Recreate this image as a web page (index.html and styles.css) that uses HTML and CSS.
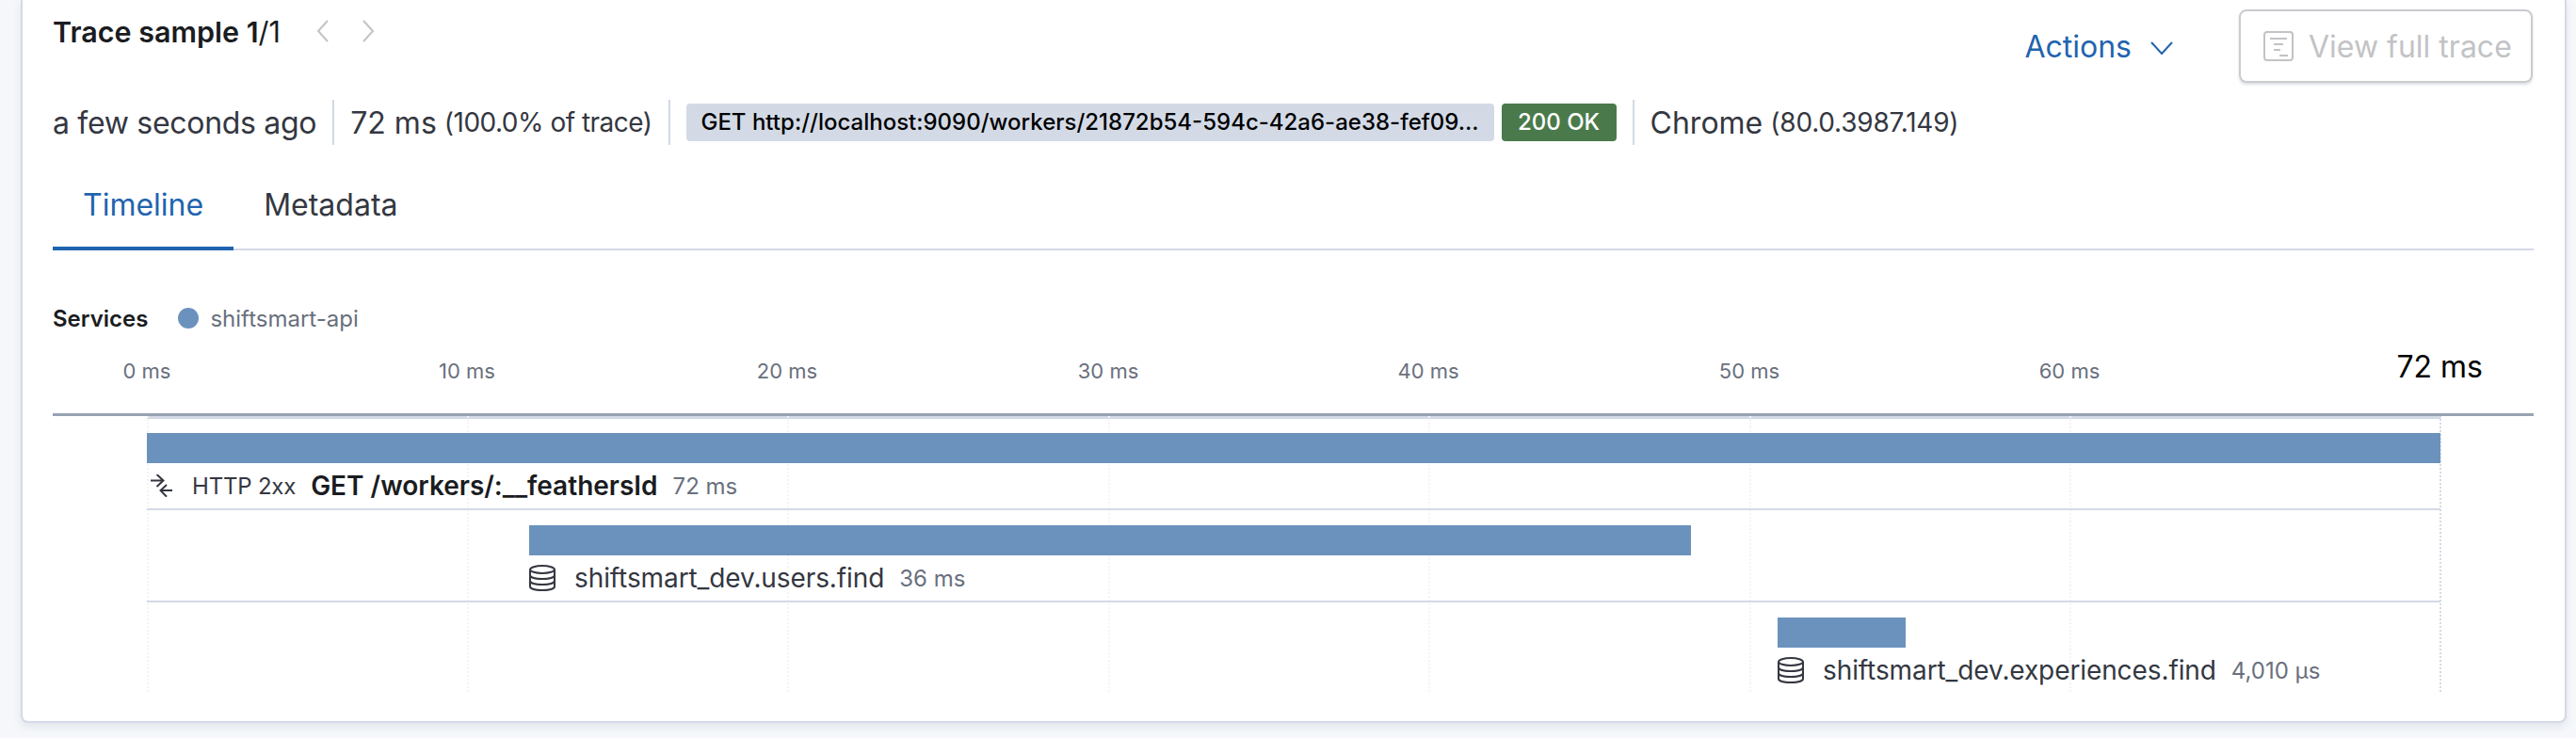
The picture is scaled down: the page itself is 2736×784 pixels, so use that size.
FILE: index.html
```html
<!DOCTYPE html>
<html lang="en">
<head>
    <meta charset="UTF-8">
    <title>Trace sample</title>
    <link rel="stylesheet" href="styles.css">
</head>
<body>
    <div class="panel">
        <div class="head">
            <div class="title-wrap">
                <h3 class="title">Trace sample 1<span class="title-count">/1</span></h3>
                <svg class="pager" viewBox="0 0 14 24"><path d="M12 1 L2 12 L12 23"/></svg>
                <svg class="pager pager-next" viewBox="0 0 14 24"><path d="M2 1 L12 12 L2 23"/></svg>
            </div>
            <div class="head-actions">
                <div class="actions">Actions
                    <svg class="actions-arrow" viewBox="0 0 24 14"><path d="M1 1 L12 13 L23 1"/></svg>
                </div>
                <div class="btn-disabled">
                    <svg class="btn-icon" viewBox="0 0 32 32">
                        <rect x="1" y="1" width="30" height="30" rx="3"/>
                        <path d="M7 8 H25 M11 14 H21 M11 20 H18 M17 26 H26"/>
                    </svg>
                    View full trace
                </div>
            </div>
        </div>

        <div class="meta">
            <div class="meta-item time">a few seconds ago</div>
            <div class="meta-item">72 ms <small>(100.0% of trace)</small></div>
            <div class="meta-item badges">
                <span class="badge badge-url">GET http://localhost:9090/workers/21872b54-594c-42a6-ae38-fef09...</span>
                <span class="badge badge-ok">200 OK</span>
            </div>
            <div class="meta-item">Chrome <small class="version">(80.0.3987.149)</small></div>
        </div>

        <div class="tabs">
            <div class="tab active">Timeline</div>
            <div class="tab">Metadata</div>
        </div>

        <div class="legend">
            <span class="legend-title">Services</span>
            <span class="legend-dot"></span>
            <span class="legend-name">shiftsmart-api</span>
        </div>

        <div class="axis">
            <span class="tick" style="left: 156px">0 ms</span>
            <span class="tick" style="left: 496px">10 ms</span>
            <span class="tick" style="left: 836px">20 ms</span>
            <span class="tick" style="left: 1177px">30 ms</span>
            <span class="tick" style="left: 1517px">40 ms</span>
            <span class="tick" style="left: 1858px">50 ms</span>
            <span class="tick" style="left: 2198px">60 ms</span>
            <span class="tick tick-end">72 ms</span>
        </div>

        <div class="waterfall">
            <div class="gridline" style="left: 0px"></div>
            <div class="gridline" style="left: 340px"></div>
            <div class="gridline" style="left: 680px"></div>
            <div class="gridline" style="left: 1021px"></div>
            <div class="gridline" style="left: 1361px"></div>
            <div class="gridline" style="left: 1702px"></div>
            <div class="gridline" style="left: 2042px"></div>
            <div class="gridline gridline-end" style="left: 2435px"></div>

            <div class="span-row">
                <div class="bar" style="margin-left: 0px; width: 2436px"></div>
                <div class="span-label" style="margin-left: 0px">
                    <svg class="icon-http" viewBox="0 0 24 24">
                        <path d="M0 6.5 H13.5 M6.5 0 L13.5 6.5 L6.5 13 M23 17 H10.5 M17 11 L10.5 17 L17 23.7"/>
                    </svg>
                    <span class="status">HTTP 2xx</span>
                    <b class="span-name">GET /workers/:__feathersId</b>
                    <span class="duration">72 ms</span>
                </div>
            </div>
            <div class="span-row">
                <div class="bar" style="margin-left: 406px; width: 1234px"></div>
                <div class="span-label" style="margin-left: 406px">
                    <svg class="icon-db" viewBox="0 0 28 28">
                        <ellipse cx="14" cy="5" rx="13" ry="4"/>
                        <path d="M1 5 V23 C1 25.5 7 27 14 27 C21 27 27 25.5 27 23 V5 M1 11 C1 13.5 7 15 14 15 C21 15 27 13.5 27 11 M1 17 C1 19.5 7 21 14 21 C21 21 27 19.5 27 17"/>
                    </svg>
                    <span class="db-name">shiftsmart_dev.users.find</span>
                    <span class="duration">36 ms</span>
                </div>
            </div>
            <div class="span-row">
                <div class="bar" style="margin-left: 1732px; width: 136px"></div>
                <div class="span-label" style="margin-left: 1732px">
                    <svg class="icon-db" viewBox="0 0 28 28">
                        <ellipse cx="14" cy="5" rx="13" ry="4"/>
                        <path d="M1 5 V23 C1 25.5 7 27 14 27 C21 27 27 25.5 27 23 V5 M1 11 C1 13.5 7 15 14 15 C21 15 27 13.5 27 11 M1 17 C1 19.5 7 21 14 21 C21 21 27 19.5 27 17"/>
                    </svg>
                    <span class="db-name">shiftsmart_dev.experiences.find</span>
                    <span class="duration">4,010 μs</span>
                </div>
            </div>
        </div>
    </div>
</body>
</html>
```

FILE: styles.css
```css
html, body {
    margin: 0;
    padding: 0;
}
body {
    font-family: Inter, "Liberation Sans", sans-serif;
    background-color: #f5f7fa;
    color: #343741;
    height: 784px;
    overflow: hidden;
}
.panel {
    box-sizing: border-box;
    width: 2704px;
    height: 768px;
    margin-left: 22px;
    padding: 10px 34px 0 32px;
    background: white;
    border: 2px solid #d3dae6;
    border-top: none;
    border-radius: 0 0 8px 8px;
    box-shadow: 0 4px 8px rgba(152, 162, 179, 0.2);
}
.head {
    display: flex;
    justify-content: space-between;
    height: 78px;
}
.title-wrap {
    display: flex;
    align-items: center;
    height: 46px;
}
.title {
    margin: 0;
    font-size: 30.5px;
    font-weight: 600;
    color: #1a1c21;
}
.title-count {
    font-weight: 400;
}
.pager {
    width: 14px;
    height: 24px;
    margin-left: 38px;
    fill: none;
    stroke: #c2c3c6;
    stroke-width: 2;
}
.pager-next {
    margin-left: 34px;
}
.head-actions {
    display: flex;
    align-items: center;
}
.actions {
    display: flex;
    align-items: center;
    font-size: 32px;
    color: #1f64ae;
    margin-right: 70px;
}
.actions-arrow {
    width: 24px;
    height: 14px;
    margin-left: 20px;
    margin-top: 4px;
    fill: none;
    stroke: #1f64ae;
    stroke-width: 2;
}
.btn-disabled {
    box-sizing: border-box;
    display: flex;
    align-items: center;
    width: 312px;
    height: 78px;
    padding-left: 24px;
    font-size: 32px;
    color: #c2c3c6;
    border: 2px solid #c9cbcf;
    border-radius: 8px;
    box-shadow: 0 2px 3px rgba(152, 162, 179, 0.35);
}
.btn-icon {
    width: 32px;
    height: 32px;
    margin-right: 16px;
    fill: none;
    stroke: #c2c3c6;
    stroke-width: 2;
}
.meta {
    display: flex;
    align-items: center;
    height: 48px;
    margin-top: 18px;
    font-size: 32px;
}
.meta-item {
    display: flex;
    align-items: center;
    gap: 8px;
    height: 48px;
    padding-right: 17px;
    margin-right: 17px;
    border-right: 2px solid #d3dae6;
    white-space: nowrap;
}
.meta-item:last-child {
    border-right: none;
}
.time {
    letter-spacing: -0.3px;
}
.meta small {
    font-size: 28px;
    letter-spacing: -0.5px;
}
.meta small.version {
    letter-spacing: -0.2px;
}
.badges {
    gap: 8px;
}
.badge {
    box-sizing: border-box;
    display: block;
    height: 40px;
    line-height: 40px;
    font-size: 24px;
    font-weight: 500;
    border-radius: 4px;
    white-space: nowrap;
    text-align: center;
}
.badge-url {
    width: 858px;
    background: #d3dae6;
    color: black;
}
.badge-ok {
    width: 122px;
    background: #4a7a4b;
    color: white;
}
.tabs {
    display: flex;
    height: 110px;
    border-bottom: 2px solid #d3dae6;
    box-sizing: border-box;
    width: 2635px;
    margin-top: 2px;
}
.tab {
    box-sizing: border-box;
    height: 110px;
    padding: 42px 32px 0 32px;
    font-size: 32px;
    line-height: 40px;
}
.tab.active {
    color: #1f64ae;
    border-bottom: 4px solid #1f64ae;
}
.legend {
    display: flex;
    align-items: center;
    height: 28px;
    margin-top: 58px;
    font-size: 24px;
}
.legend-title {
    font-weight: 600;
    color: #1a1c21;
}
.legend-dot {
    width: 22px;
    height: 22px;
    margin: 0 12px 0 32px;
    border-radius: 50%;
    background: #6b92bd;
}
.legend-name {
    color: #69707d;
}
.axis {
    position: relative;
    width: 2635px;
    height: 90px;
    border-bottom: 3px solid #98a2b3;
    box-sizing: border-box;
}
.tick {
    position: absolute;
    top: 29px;
    transform: translateX(-50%);
    font-size: 22px;
    color: #69707d;
    white-space: nowrap;
    margin-left: -56px;
}
.tick-end {
    right: 54px;
    top: 18px;
    transform: none;
    margin-left: 0;
    font-size: 32px;
    color: black;
}
.waterfall {
    position: relative;
    box-sizing: border-box;
    width: 2436px;
    height: 293px;
    margin-left: 100px;
    padding-top: 2px;
    background: linear-gradient(#d3dae6, #d3dae6) top left / 100% 3px no-repeat;
}
.gridline {
    position: absolute;
    top: 0;
    bottom: 0;
    width: 0;
    border-left: 2px dotted #f3f4f6;
}
.gridline-end {
    border-left-color: #d3dae6;
}
.span-row {
    position: relative;
    box-sizing: border-box;
    height: 98px;
    padding-top: 16px;
    border-bottom: 2px solid #d3dae6;
}
.span-row:last-child {
    border-bottom: none;
}
.bar {
    height: 32px;
    background: #6b92bd;
}
.span-label {
    display: flex;
    align-items: center;
    height: 48px;
    font-size: 28px;
    white-space: nowrap;
}
.icon-http {
    width: 24px;
    height: 24px;
    margin-left: 4px;
    fill: none;
    stroke: #343741;
    stroke-width: 2;
}
.icon-db {
    width: 28px;
    height: 28px;
    fill: none;
    stroke: #343741;
    stroke-width: 2;
}
.status {
    margin-left: 20px;
    font-size: 24px;
    letter-spacing: -0.2px;
}
.span-name {
    margin-left: 16px;
    font-size: 28px;
    font-weight: 600;
    color: #1a1c21;
}
.db-name {
    margin-left: 20px;
    letter-spacing: -0.1px;
}
.duration {
    margin-left: 16px;
    font-size: 24px;
    color: #69707d;
}
```
